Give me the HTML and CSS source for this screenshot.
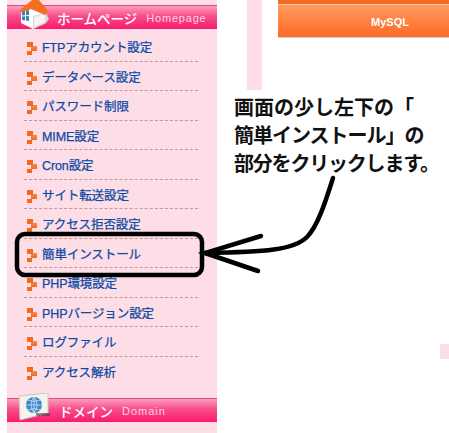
FILE: index.html
```html
<!DOCTYPE html>
<html lang="ja">
<head>
  <meta charset="UTF-8">
  <title>ホームページ</title>
  <link rel="stylesheet" href="styles.css">
</head>
<body>

  <div class="page">
    <div class="side">
      <div class="side-head">
        <svg class="side-icon" width="32" height="30" viewBox="0 0 32 30">
          <path d="M3 10 L3 23 L15 29 L28 23 L28 13 L12 6 Z" fill="#fff"/>
          <path d="M15 29 L28 23 L31 19 L28 13 L15 16 Z" fill="#d9d6d2"/>
          <path d="M16 17 L27 14 L27 22 L16 27 Z" fill="#f6f4f1"/>
          <path d="M2 10 L14 0 L21 0 L30 11 L27 15 L13 9 L4 13 Z" fill="#f26f22"/>
          <path d="M4 12 L11 10 L11 21 L4 20 Z" fill="#3f7fb5"/>
          <path d="M7.5 11 V21 M4 16 L11 15.500" stroke="#fff" stroke-width="1"/>
        </svg>
        <b>ホームページ</b><span>Homepage</span>
      </div>
      <ul class="menu">
        <li>FTPアカウント設定</li>
        <li>データベース設定</li>
        <li>パスワード制限</li>
        <li>MIME設定</li>
        <li>Cron設定</li>
        <li>サイト転送設定</li>
        <li>アクセス拒否設定</li>
        <li>簡単インストール</li>
        <li>PHP環境設定</li>
        <li>PHPバージョン設定</li>
        <li>ログファイル</li>
        <li>アクセス解析</li>
      </ul>
      <div class="side-head side-head-domain">
        <svg class="side-icon" width="32" height="28" viewBox="0 0 32 28">
          <path d="M1 3 L30 0 L30 20 L2 27 Z" fill="#f4f4ee" stroke="#c9c9c0"/>
          <circle cx="16" cy="12" r="8" fill="#3f86c6"/>
          <path d="M8 12 h16 M16 4 v16 M10 7 q6 3 12 0 M10 17 q6 -3 12 0 M16 4 q-6 8 0 16 M16 4 q6 8 0 16" stroke="#cfe4f5" stroke-width="0.8" fill="none"/>
          <text class="www" x="18" y="23">www</text>
        </svg>
        <b>ドメイン</b><span>Domain</span>
      </div>
    </div>

    <div class="strip"></div>

    <div class="main">
      <div class="tab">MySQL</div>
      <div class="corner"></div>
    </div>
  </div>

  <svg class="marks" width="449" height="433" viewBox="0 0 449 433">
    <rect x="17" y="234" width="185" height="41" rx="8" fill="none" stroke="#000" stroke-width="4.5"/>
    <path d="M333 178 C326 200 318 226 307 237 C294 250 265 252 205 253" fill="none" stroke="#000" stroke-width="4.5" stroke-linecap="round"/>
    <path d="M261 236 L205 253 L258 271" fill="none" stroke="#000" stroke-width="4.5" stroke-linecap="round"/>
  </svg>

  <p class="note">
    <span>画面の少し左下の「</span>
    <span class="tight">簡単インストール」の</span>
    <span class="tighter">部分をクリックします。</span>
  </p>

</body>
</html>
```

FILE: styles.css
```css
html, body {
  margin: 0;
  height: 433px;
  overflow: hidden;
  background-color: #fff;
  font-family: "Liberation Sans", "Noto Sans CJK JP", sans-serif;
}

.page {
  display: flex;
  align-items: flex-start;
  padding-left: 7px;
}

.side {
  flex: none;
  width: 210px;
  height: 433px;
  padding-top: 5px;
  box-sizing: border-box;
  background-color: #fddde6;
}

.side-head {
  position: relative;
  display: flex;
  align-items: center;
  height: 24px;
  padding-left: 50px;
  box-sizing: border-box;
  border-top: 1px solid #d94a80;
  background: linear-gradient(#fb9dbd, #f74c8a 45%, #f91a6e);
  color: #fff;
}

.side-head b {
  font-size: 13.5px;
  font-weight: 500;
}

.side-head span {
  margin-left: 9px;
  font-size: 11px;
  letter-spacing: 0.8px;
  color: #fdd3e2;
}

.side-head-domain {
  padding-left: 52px;
  margin-top: 12px;
}

.side-head-domain span {
  margin-left: 9px;
  letter-spacing: 1px;
}

.side-icon {
  position: absolute;
  left: 11px;
  top: -6px;
}

.www {
  font-size: 6px;
  font-weight: bold;
  fill: #444;
}

.menu {
  margin: 3px 0 0;
  padding: 0;
  list-style: none;
}

.menu li {
  position: relative;
  height: 29.5px;
  margin: 0 19px 0 17px;
  padding-left: 18px;
  line-height: 32px;
  box-sizing: border-box;
  border-bottom: 1px dashed #c4979f;
  font-size: 12.5px;
  letter-spacing: -0.1px;
  color: #0b4aa5;
  -webkit-text-stroke: 0.25px #0b4aa5;
}

.menu li:last-child {
  border-bottom: none;
}

.menu li::before {
  content: "";
  position: absolute;
  left: 3px;
  top: 10px;
  width: 10px;
  height: 13px;
  background:
    linear-gradient(#f26a22, #f26a22) 0 0 / 6px 5px no-repeat,
    linear-gradient(#f58a4a, #f26a22) 4px 4px / 6px 5px no-repeat,
    linear-gradient(#f26a22, #f26a22) 0 9px / 5px 4px no-repeat;
}

.strip {
  flex: none;
  width: 15px;
  height: 90px;
  margin-left: 30px;
  background-color: #fddde6;
}

.main {
  flex: none;
  width: 171px;
  margin-left: 16px;
}

.tab {
  height: 38px;
  padding: 5px 0 0 53px;
  box-sizing: border-box;
  line-height: 34px;
  border-bottom: 1px solid #dccbbc;
  background: linear-gradient(#f26a22 4px, #f9c7a3 4px, #f9c7a3 5px, #ff9a5e 5px, #ff6a26 100%);
  color: #fff;
  font-size: 11px;
  font-weight: bold;
  text-align: center;
}

.corner {
  width: 9px;
  height: 15px;
  margin: 306px 0 0 162px;
  background-color: #fddde6;
}

.marks {
  position: absolute;
  left: 0;
  top: 0;
}

.note {
  position: absolute;
  left: 234px;
  top: 94px;
  margin: 0;
  font-size: 20px;
  font-weight: bold;
  line-height: 28px;
  white-space: nowrap;
  color: #111;
}

.note span {
  display: block;
}

.note .tight {
  letter-spacing: -1px;
}

.note .tighter {
  letter-spacing: -1.2px;
}
```
